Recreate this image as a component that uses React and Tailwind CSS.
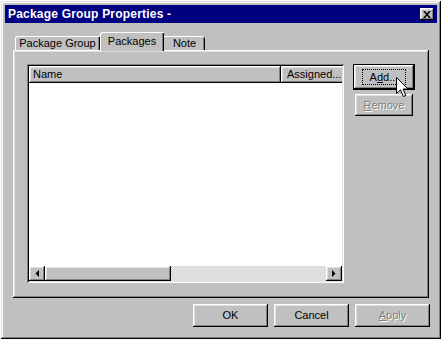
import React from "react";

const raised =
  "shadow-[inset_-1px_-1px_0_#000,inset_1px_1px_0_#fff,inset_-2px_-2px_0_#808080,inset_2px_2px_0_#dfdfdf]";

function Btn({ className = "", children }) {
  return (
    <div className={`bg-[#c0c0c0] ${raised} flex items-center justify-center ${className}`}>
      {children}
    </div>
  );
}

function Arrow({ dir }) {
  return (
    <div className={`w-[16px] h-full bg-[#c0c0c0] ${raised} flex items-center justify-center`}>
      <svg width="4" height="7" viewBox="0 0 4 7">
        {dir === "left" ? (
          <polygon points="4,0 4,7 0.5,3.5" fill="#000" />
        ) : (
          <polygon points="0,0 0,7 3.5,3.5" fill="#000" />
        )}
      </svg>
    </div>
  );
}

export default function App() {
  const font = "font-['Liberation_Sans',Arial,sans-serif]";
  return (
    <div className={`relative w-[448px] h-[345px] bg-white pt-[1px] pl-[1px] ${font} text-[11px] text-black`}>
      <div className="w-[440px] h-[338px] bg-[#c0c0c0] p-[4px] shadow-[inset_-1px_-1px_0_#000,inset_1px_1px_0_#dfdfdf,inset_-2px_-2px_0_#808080,inset_2px_2px_0_#fff] flex flex-col">
        {/* Title bar */}
        <div className="h-[18px] bg-[#000080] flex items-center justify-between pl-[3px] pr-[3px]">
          <span className="text-white font-bold text-[12px] leading-none tracking-[0.2px]">
            Package Group Properties -
          </span>
          <div className={`w-[14px] h-[12px] bg-[#c0c0c0] ${raised} flex items-center justify-center`}>
            <svg width="8" height="7" viewBox="0 0 8 7">
              <path d="M0 0 L2 0 L4 2.3 L6 0 L8 0 L5 3.5 L8 7 L6 7 L4 4.7 L2 7 L0 7 L3 3.5 Z" fill="#000" />
            </svg>
          </div>
        </div>

        {/* Tabs */}
        <div className="pt-[9px] px-[8px]">
          <div className="h-[18px] flex items-end pl-[2px]">
            <div className="w-[85px] h-[14px] bg-[#c0c0c0] rounded-tl-[2px] shadow-[inset_1px_1px_0_#fff,inset_-1px_0_0_#000,inset_-2px_0_0_#808080] flex items-center justify-center leading-none">
              Package Group
            </div>
            <div className="relative z-10 w-[64px] h-[19px] mb-[-1px] bg-[#c0c0c0] rounded-tl-[2px] shadow-[inset_1px_1px_0_#fff,inset_-1px_0_0_#000,inset_-2px_0_0_#808080] flex items-start justify-center pt-[4px] leading-none">
              Packages
            </div>
            <div className="w-[41px] h-[14px] bg-[#c0c0c0] rounded-tr-[2px] shadow-[inset_0_1px_0_#fff,inset_-1px_0_0_#000,inset_-2px_0_0_#808080] flex items-center justify-center leading-none">
              Note
            </div>
          </div>

          {/* Panel */}
          <div className="h-[248px] bg-[#c0c0c0] shadow-[inset_-1px_-1px_0_#000,inset_1px_1px_0_#fff,inset_-2px_-2px_0_#808080,inset_2px_2px_0_#dfdfdf] pl-[14px] pt-[14px] flex">
            {/* List view */}
            <div className="w-[317px] h-[219px] p-[2px] bg-white shadow-[inset_1px_1px_0_#808080,inset_-1px_-1px_0_#fff,inset_2px_2px_0_#000,inset_-2px_-2px_0_#dfdfdf] flex flex-col">
              <div className="h-[17px] flex overflow-hidden">
                <div className={`w-[252px] shrink-0 bg-[#c0c0c0] ${raised} flex items-center pl-[4px] leading-none`}>
                  Name
                </div>
                <div className={`w-[75px] shrink-0 bg-[#c0c0c0] ${raised} flex items-center pl-[6px] leading-none`}>
                  Assigned...
                </div>
              </div>
              <div className="flex-1 bg-white" />
              <div className="h-[15px] flex">
                <Arrow dir="left" />
                <div className={`w-[126px] h-full bg-[#c0c0c0] ${raised}`} />
                <div className="flex-1 h-full bg-[repeating-conic-gradient(#d6d6d6_0%_25%,#e8e8e8_0%_50%)] bg-[length:2px_2px]" />
                <Arrow dir="right" />
              </div>
            </div>

            {/* Side buttons */}
            <div className="ml-[9px] w-[62px] flex flex-col items-center gap-[4px]">
              <div className="w-[62px] h-[26px] border border-black">
                <Btn className="w-full h-full">
                  <div className="border border-dotted border-black px-[7px] h-[16px] flex items-center leading-none">
                    A<span className="underline">d</span>d...
                  </div>
                </Btn>
              </div>
              <Btn className="w-[58px] h-[22px]">
                <span className="text-[#808080] [text-shadow:1px_1px_0_#fff] leading-none">
                  <span className="underline">R</span>emove
                </span>
              </Btn>
            </div>
          </div>

          {/* Bottom buttons */}
          <div className="mt-[6px] h-[23px] flex justify-end gap-[6px] mr-[-1px]">
            <Btn className="w-[75px] h-[23px] leading-none">OK</Btn>
            <Btn className="w-[75px] h-[23px] leading-none">Cancel</Btn>
            <Btn className="w-[75px] h-[23px]">
              <span className="text-[#808080] [text-shadow:1px_1px_0_#fff] leading-none">
                <span className="underline">A</span>pply
              </span>
            </Btn>
          </div>
        </div>
      </div>

      {/* Mouse cursor */}
      <svg className="absolute left-[396px] top-[77px]" width="13" height="21" viewBox="0 0 13 21">
        <path d="M0.5 0.5 L0.5 16.5 L4.5 12.8 L7.3 19.5 L9.8 18.5 L7.1 12 L12 12 Z" fill="#fff" stroke="#000" strokeWidth="1" />
      </svg>
    </div>
  );
}
